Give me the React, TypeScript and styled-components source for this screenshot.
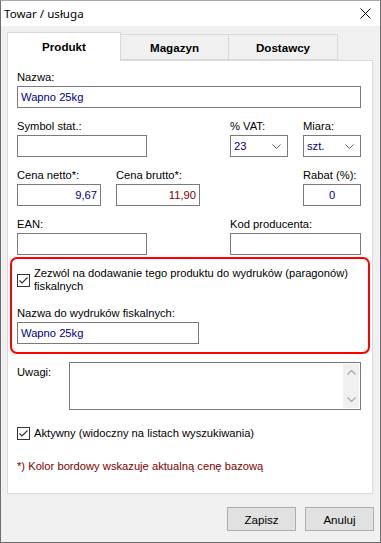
import React from "react";
import styled, { createGlobalStyle } from "styled-components";

const GlobalStyle = createGlobalStyle`
  html, body {
    margin: 0;
    padding: 0;
    background: #ffffff;
  }
  body {
    font-family: "Liberation Sans", Arial, sans-serif;
    font-size: 11.2px;
    color: #000;
  }
`;

const Window = styled.div`
  width: 381px;
  height: 543px;
  box-sizing: border-box;
  border: 1px solid #6e6e6e;
  border-top-color: #aaaaaa;
  display: flex;
  flex-direction: column;
  background: #f0f0f0;
`;

const TitleBar = styled.header`
  height: 25px;
  background: #ffffff;
  display: flex;
  align-items: center;
  justify-content: space-between;
  padding: 0 9px 0 3px;
  font-family: "Noto Sans", "Liberation Sans", sans-serif;
  font-size: 11.6px;
`;

const Body = styled.div`
  flex: 1;
  display: flex;
  flex-direction: column;
  padding: 6px 7px 10px 6px;
`;

const TabStrip = styled.div`
  display: flex;
  align-items: flex-end;
  height: 28px;
`;

const Tab = styled.div<{ $active?: boolean; $w: number }>`
  width: ${(p) => p.$w}px;
  box-sizing: border-box;
  height: ${(p) => (p.$active ? 29 : 26)}px;
  margin-bottom: ${(p) => (p.$active ? -1 : 0)}px;
  background: ${(p) => (p.$active ? "#ffffff" : "#f0f0f0")};
  border: 1px solid #d9d9d9;
  border-bottom: ${(p) => (p.$active ? "none" : "1px solid #d9d9d9")};
  margin-left: ${(p) => (p.$active ? 0 : -1)}px;
  position: relative;
  z-index: ${(p) => (p.$active ? 1 : 0)};
  display: flex;
  align-items: center;
  justify-content: center;
  padding-bottom: ${(p) => (p.$active ? 2 : 0)}px;
  font-weight: bold;
  font-size: 11.6px;
`;

const Panel = styled.section`
  width: 366px;
  height: 434px;
  box-sizing: border-box;
  background: #ffffff;
  border: 1px solid #d9d9d9;
  padding: 9px 10px 0 9px;
  display: flex;
  flex-direction: column;
`;

const Row = styled.div<{ $mt?: number }>`
  display: flex;
  align-items: flex-start;
  margin-top: ${(p) => p.$mt ?? 0}px;
`;

const Field = styled.div<{ $w: number; $ml?: number; $mt?: number }>`
  width: ${(p) => p.$w}px;
  margin-left: ${(p) => p.$ml ?? 0}px;
  margin-top: ${(p) => p.$mt ?? 0}px;
  display: flex;
  flex-direction: column;
`;

const Label = styled.div<{ $mt?: number }>`
  line-height: 14px;
  height: 14px;
  margin-top: ${(p) => p.$mt ?? 0}px;
  margin-bottom: 2px;
  white-space: nowrap;
`;

const Input = styled.div<{ $align?: string; $tone?: string }>`
  height: 22px;
  box-sizing: border-box;
  border: 1px solid #7a7a7a;
  background: #ffffff;
  display: flex;
  align-items: center;
  justify-content: ${(p) => p.$align ?? "flex-start"};
  padding: 0 3px 0 3px;
  color: ${(p) => p.$tone ?? "#000080"};
  white-space: nowrap;
`;

const Combo = styled(Input)`
  justify-content: space-between;
  padding: 0 6px 0 3px;
`;

const Chevron = () => (
  <svg width="9" height="5" viewBox="0 0 9 5">
    <polyline points="0.5,0.5 4.5,4.5 8.5,0.5" fill="none" stroke="#606060" strokeWidth="1" />
  </svg>
);

const FiscalBox = styled.div`
  margin-top: 2px;
  margin-left: -7px;
  width: 360px;
  box-sizing: border-box;
  border: 2px solid #ff0000;
  border-radius: 7px;
  padding: 8px 5px 8px 5px;
  display: flex;
  flex-direction: column;
`;

const CheckRow = styled.div<{ $mt?: number }>`
  display: flex;
  align-items: center;
  gap: 4px;
  margin-top: ${(p) => p.$mt ?? 0}px;
`;

const CheckText = styled.div`
  line-height: 13px;
  white-space: nowrap;
`;

const Box = styled.div`
  width: 13px;
  height: 13px;
  flex: none;
  box-sizing: border-box;
  border: 1px solid #333333;
  background: #ffffff;
  display: flex;
  align-items: center;
  justify-content: center;
`;

const CheckBox = () => (
  <Box>
    <svg width="11" height="11" viewBox="0 0 11 11">
      <polyline points="1.5,5.5 4,8 9.5,2.5" fill="none" stroke="#333333" strokeWidth="1.2" />
    </svg>
  </Box>
);

const Memo = styled.div`
  margin-left: 18px;
  width: 292px;
  height: 48px;
  box-sizing: border-box;
  border: 1px solid #7a7a7a;
  background: #ffffff;
  display: flex;
  justify-content: flex-end;
  padding: 1px;
`;

const ScrollBar = styled.div`
  width: 16px;
  background: #f0f0f0;
  display: flex;
  flex-direction: column;
  justify-content: space-between;
  align-items: center;
  padding: 6px 0;
`;

const Note = styled.div`
  margin-top: 19px;
  line-height: 14px;
  color: #800000;
`;

const Footer = styled.footer`
  display: flex;
  justify-content: flex-end;
  gap: 9px;
  margin-top: 13px;
  margin-right: -1px;
`;

const Button = styled.button`
  width: 69px;
  height: 24px;
  background: #e1e1e1;
  border: 1px solid #adadad;
  font-family: "Liberation Sans", Arial, sans-serif;
  font-size: 11.6px;
  color: #000;
  padding: 0;
`;

export default function App() {
  return (
    <>
      <GlobalStyle />
      <Window>
        <TitleBar>
          <span>Towar / usługa</span>
          <svg width="11" height="11" viewBox="0 0 11 11">
            <path d="M0.5 0.5 L10.5 10.5 M10.5 0.5 L0.5 10.5" stroke="#000" strokeWidth="1" />
          </svg>
        </TitleBar>
        <Body>
          <TabStrip>
            <Tab $active $w={114}>Produkt</Tab>
            <Tab $w={109}>Magazyn</Tab>
            <Tab $w={110}>Dostawcy</Tab>
          </TabStrip>
          <Panel>
            <Row>
              <Field $w={344}>
                <Label>Nazwa:</Label>
                <Input>Wapno 25kg</Input>
              </Field>
            </Row>
            <Row $mt={11}>
              <Field $w={130}>
                <Label>Symbol stat.:</Label>
                <Input />
              </Field>
              <Field $w={58} $ml={83}>
                <Label>% VAT:</Label>
                <Combo>
                  23
                  <Chevron />
                </Combo>
              </Field>
              <Field $w={58} $ml={15}>
                <Label>Miara:</Label>
                <Combo>
                  szt.
                  <Chevron />
                </Combo>
              </Field>
            </Row>
            <Row $mt={11}>
              <Field $w={84}>
                <Label>Cena netto*:</Label>
                <Input $align="flex-end">9,67</Input>
              </Field>
              <Field $w={84} $ml={15}>
                <Label>Cena brutto*:</Label>
                <Input $align="flex-end" $tone="#800000">11,90</Input>
              </Field>
              <Field $w={58} $ml={103}>
                <Label>Rabat (%):</Label>
                <Input $align="center">0</Input>
              </Field>
            </Row>
            <Row $mt={11}>
              <Field $w={130}>
                <Label>EAN:</Label>
                <Input />
              </Field>
              <Field $w={131} $ml={83}>
                <Label>Kod producenta:</Label>
                <Input />
              </Field>
            </Row>
            <FiscalBox>
              <CheckRow>
                <CheckBox />
                <CheckText>
                  Zezwól na dodawanie tego produktu do wydruków (paragonów)
                  <br />
                  fiskalnych
                </CheckText>
              </CheckRow>
              <Field $w={182} $mt={13}>
                <Label>Nazwa do wydruków fiskalnych:</Label>
                <Input>Wapno 25kg</Input>
              </Field>
            </FiscalBox>
            <Row $mt={8}>
              <Label $mt={3}>Uwagi:</Label>
              <Memo>
                <ScrollBar>
                  <svg width="9" height="5" viewBox="0 0 9 5">
                    <polyline points="0.5,4.5 4.5,0.5 8.5,4.5" fill="none" stroke="#a8a8a8" strokeWidth="1.3" />
                  </svg>
                  <svg width="9" height="5" viewBox="0 0 9 5">
                    <polyline points="0.5,0.5 4.5,4.5 8.5,0.5" fill="none" stroke="#a8a8a8" strokeWidth="1.3" />
                  </svg>
                </ScrollBar>
              </Memo>
            </Row>
            <CheckRow $mt={17}>
              <CheckBox />
              <CheckText>Aktywny (widoczny na listach wyszukiwania)</CheckText>
            </CheckRow>
            <Note>*) Kolor bordowy wskazuje aktualną cenę bazową</Note>
          </Panel>
          <Footer>
            <Button>Zapisz</Button>
            <Button>Anuluj</Button>
          </Footer>
        </Body>
      </Window>
    </>
  );
}
